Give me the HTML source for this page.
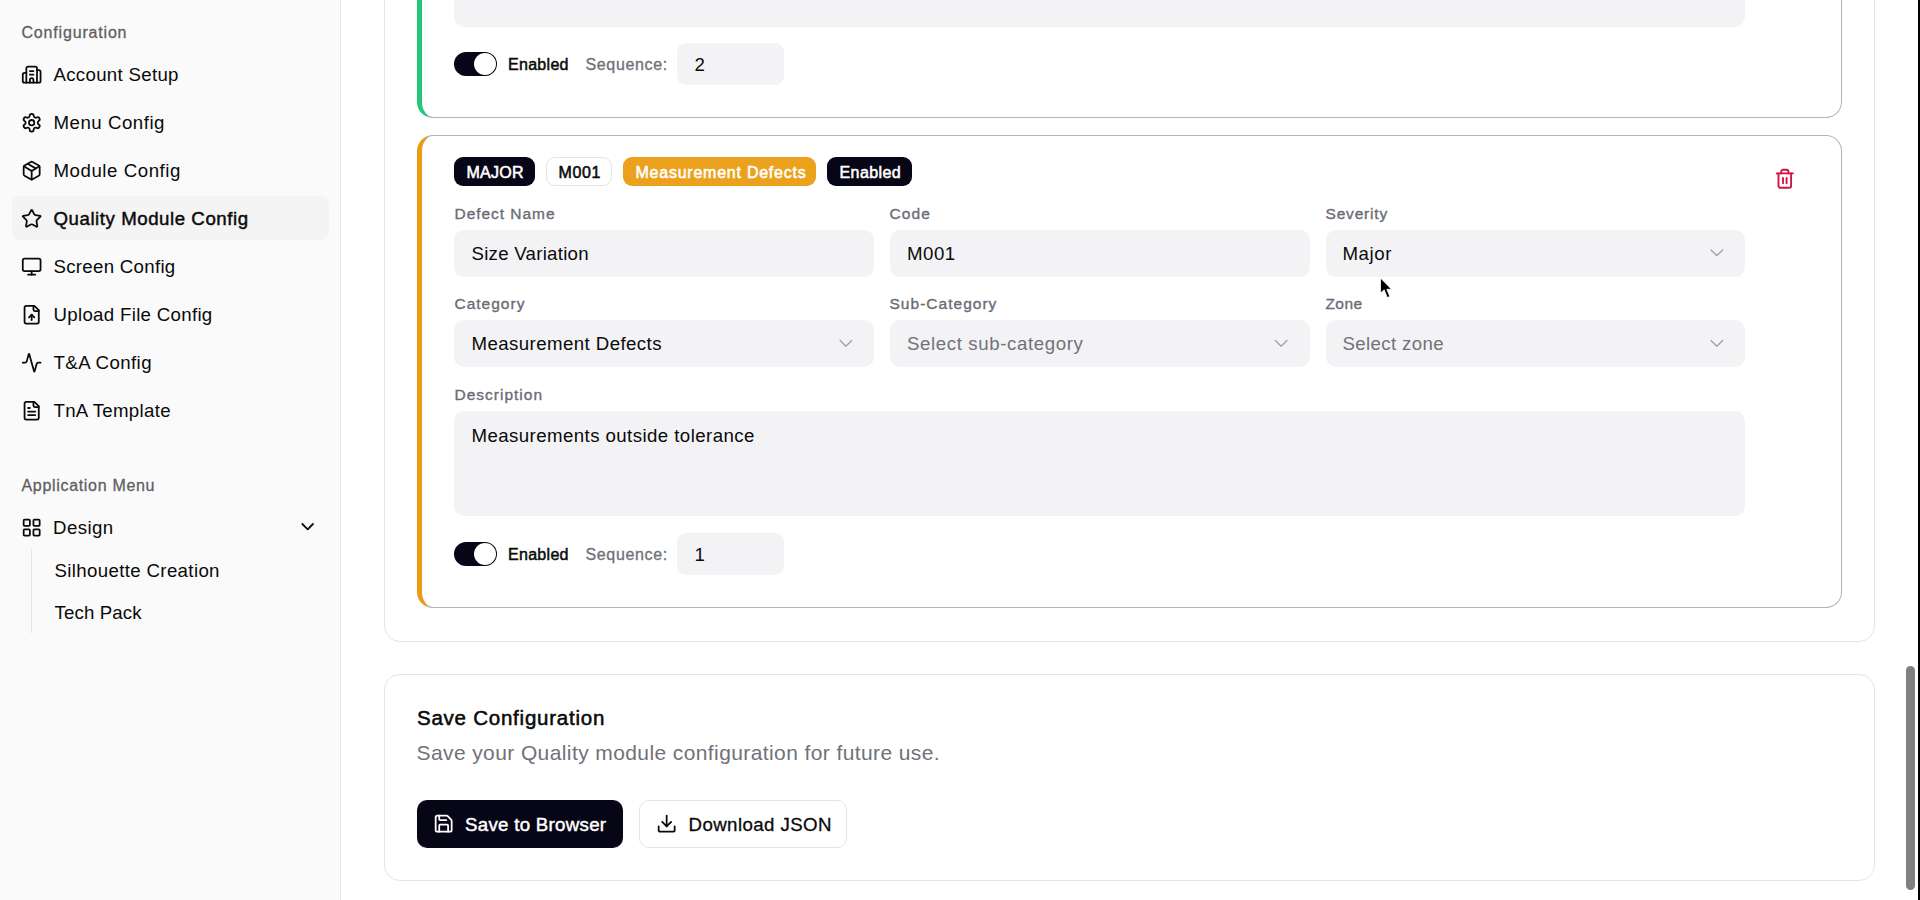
<!DOCTYPE html>
<html><head><meta charset="utf-8"><style>
html,body{margin:0;padding:0;width:1920px;height:900px;overflow:hidden;background:#fff;font-family:"Liberation Sans", sans-serif;}
</style></head><body>
<div style="position:absolute;left:0px;top:0px;width:340px;height:900px;background:#fafafa;"></div><div style="position:absolute;left:340px;top:0px;width:1px;height:900px;background:#e5e5e5;"></div><div style="position:absolute;left:21.50px;top:25.46px;font-size:16px;line-height:16px;font-weight:400;color:#5f5f63;letter-spacing:0.82px;white-space:pre;-webkit-text-stroke:0.3px #5f5f63;">Configuration</div><div style="position:absolute;left:12px;top:196px;width:317px;height:44px;background:#f4f4f4;border-radius:7px;"></div><div style="position:absolute;left:53.50px;top:66.20px;font-size:18.67px;line-height:18.67px;font-weight:400;color:#0a0a0a;letter-spacing:0.3px;white-space:pre;">Account Setup</div><svg style="position:absolute;left:21.3px;top:63.5px;overflow:visible" width="21.33" height="21.33" viewBox="0 0 24 24" fill="none" stroke="#0a0a0a" stroke-width="2" stroke-linecap="round" stroke-linejoin="round"><path d="M10 12h4"/><path d="M10 8h4"/><path d="M14 21v-3a2 2 0 0 0-4 0v3"/><path d="M6 10H4a2 2 0 0 0-2 2v7a2 2 0 0 0 2 2h16a2 2 0 0 0 2-2V9a2 2 0 0 0-2-2h-2"/><path d="M6 21V5a2 2 0 0 1 2-2h8a2 2 0 0 1 2 2v16"/></svg><div style="position:absolute;left:53.50px;top:114.20px;font-size:18.67px;line-height:18.67px;font-weight:400;color:#0a0a0a;letter-spacing:0.52px;white-space:pre;">Menu Config</div><svg style="position:absolute;left:21.3px;top:111.5px;overflow:visible" width="21.33" height="21.33" viewBox="0 0 24 24" fill="none" stroke="#0a0a0a" stroke-width="2" stroke-linecap="round" stroke-linejoin="round"><path d="M12.22 2h-.44a2 2 0 0 0-2 2v.18a2 2 0 0 1-1 1.73l-.43.25a2 2 0 0 1-2 0l-.15-.08a2 2 0 0 0-2.73.73l-.22.38a2 2 0 0 0 .73 2.730l.15.1a2 2 0 0 1 1 1.72v.51a2 2 0 0 1-1 1.74l-.15.09a2 2 0 0 0-.73 2.73l.22.38a2 2 0 0 0 2.73.73l.15-.08a2 2 0 0 1 2 0l.43.25a2 2 0 0 1 1 1.73V20a2 2 0 0 0 2 2h.44a2 2 0 0 0 2-2v-.18a2 2 0 0 1 1-1.73l.43-.25a2 2 0 0 1 2 0l.15.08a2 2 0 0 0 2.73-.73l.22-.39a2 2 0 0 0-.73-2.73l-.15-.08a2 2 0 0 1-1-1.74v-.5a2 2 0 0 1 1-1.74l.15-.09a2 2 0 0 0 .73-2.73l-.22-.38a2 2 0 0 0-2.73-.73l-.15.08a2 2 0 0 1-2 0l-.43-.25a2 2 0 0 1-1-1.73V4a2 2 0 0 0-2-2z"/><circle cx="12" cy="12" r="3"/></svg><div style="position:absolute;left:53.50px;top:162.20px;font-size:18.67px;line-height:18.67px;font-weight:400;color:#0a0a0a;letter-spacing:0.55px;white-space:pre;">Module Config</div><svg style="position:absolute;left:21.3px;top:159.5px;overflow:visible" width="21.33" height="21.33" viewBox="0 0 24 24" fill="none" stroke="#0a0a0a" stroke-width="2" stroke-linecap="round" stroke-linejoin="round"><path d="M11 21.73a2 2 0 0 0 2 0l7-4A2 2 0 0 0 21 16V8a2 2 0 0 0-1-1.73l-7-4a2 2 0 0 0-2 0l-7 4A2 2 0 0 0 3 8v8a2 2 0 0 0 1 1.73z"/><path d="M12 22V12"/><path d="m3.3 7 7.703 4.734a2 2 0 0 0 1.994 0L20.7 7"/><path d="m7.5 4.27 9 5.15"/></svg><div style="position:absolute;left:53.50px;top:210.20px;font-size:18.67px;line-height:18.67px;font-weight:400;color:#0a0a0a;letter-spacing:0.55px;white-space:pre;-webkit-text-stroke:0.45px #0a0a0a;">Quality Module Config</div><svg style="position:absolute;left:21.3px;top:207.5px;overflow:visible" width="21.33" height="21.33" viewBox="0 0 24 24" fill="none" stroke="#0a0a0a" stroke-width="2" stroke-linecap="round" stroke-linejoin="round"><path d="M11.525 2.295a.53.53 0 0 1 .95 0l2.31 4.679a2.123 2.123 0 0 0 1.595 1.16l5.166.756a.53.53 0 0 1 .294.904l-3.736 3.638a2.123 2.123 0 0 0-.611 1.878l.882 5.14a.53.53 0 0 1-.771.56l-4.618-2.428a2.122 2.122 0 0 0-1.973 0L6.396 21.01a.53.53 0 0 1-.77-.56l.881-5.139a2.122 2.122 0 0 0-.611-1.879L2.16 9.795a.53.53 0 0 1 .294-.906l5.165-.755a2.122 2.122 0 0 0 1.597-1.16z"/></svg><div style="position:absolute;left:53.50px;top:258.20px;font-size:18.67px;line-height:18.67px;font-weight:400;color:#0a0a0a;letter-spacing:0.29px;white-space:pre;">Screen Config</div><svg style="position:absolute;left:21.3px;top:255.5px;overflow:visible" width="21.33" height="21.33" viewBox="0 0 24 24" fill="none" stroke="#0a0a0a" stroke-width="2" stroke-linecap="round" stroke-linejoin="round"><rect width="20" height="14" x="2" y="3" rx="2"/><line x1="8" x2="16" y1="21" y2="21"/><line x1="12" x2="12" y1="17" y2="21"/></svg><div style="position:absolute;left:53.50px;top:306.20px;font-size:18.67px;line-height:18.67px;font-weight:400;color:#0a0a0a;letter-spacing:0.31px;white-space:pre;">Upload File Config</div><svg style="position:absolute;left:21.3px;top:303.5px;overflow:visible" width="21.33" height="21.33" viewBox="0 0 24 24" fill="none" stroke="#0a0a0a" stroke-width="2" stroke-linecap="round" stroke-linejoin="round"><path d="M15 2H6a2 2 0 0 0-2 2v16a2 2 0 0 0 2 2h12a2 2 0 0 0 2-2V7Z"/><path d="M14 2v4a2 2 0 0 0 2 2h4"/><path d="M12 12v6"/><path d="m15 15-3-3-3 3"/></svg><div style="position:absolute;left:53.50px;top:354.20px;font-size:18.67px;line-height:18.67px;font-weight:400;color:#0a0a0a;letter-spacing:0.41px;white-space:pre;">T&amp;A Config</div><svg style="position:absolute;left:21.3px;top:351.5px;overflow:visible" width="21.33" height="21.33" viewBox="0 0 24 24" fill="none" stroke="#0a0a0a" stroke-width="2" stroke-linecap="round" stroke-linejoin="round"><path d="M22 12h-2.48a2 2 0 0 0-1.93 1.46l-2.35 8.36a.25.25 0 0 1-.48 0L9.24 2.18a.25.25 0 0 0-.48 0l-2.350 8.36A2 2 0 0 1 4.49 12H2"/></svg><div style="position:absolute;left:53.50px;top:402.20px;font-size:18.67px;line-height:18.67px;font-weight:400;color:#0a0a0a;letter-spacing:0.3px;white-space:pre;">TnA Template</div><svg style="position:absolute;left:21.3px;top:399.5px;overflow:visible" width="21.33" height="21.33" viewBox="0 0 24 24" fill="none" stroke="#0a0a0a" stroke-width="2" stroke-linecap="round" stroke-linejoin="round"><path d="M15 2H6a2 2 0 0 0-2 2v16a2 2 0 0 0 2 2h12a2 2 0 0 0 2-2V7Z"/><path d="M14 2v4a2 2 0 0 0 2 2h4"/><path d="M10 9H8"/><path d="M16 13H8"/><path d="M16 17H8"/></svg><div style="position:absolute;left:21.50px;top:478.46px;font-size:16px;line-height:16px;font-weight:400;color:#5f5f63;letter-spacing:0.68px;white-space:pre;-webkit-text-stroke:0.3px #5f5f63;">Application Menu</div><div style="position:absolute;left:53.00px;top:519.20px;font-size:18.67px;line-height:18.67px;font-weight:400;color:#0a0a0a;letter-spacing:0.42px;white-space:pre;">Design</div><svg style="position:absolute;left:21.3px;top:516.5px;overflow:visible" width="21.33" height="21.33" viewBox="0 0 24 24" fill="none" stroke="#0a0a0a" stroke-width="2" stroke-linecap="round" stroke-linejoin="round"><rect width="7" height="7" x="3" y="3" rx="1"/><rect width="7" height="7" x="14" y="3" rx="1"/><rect width="7" height="7" x="14" y="14" rx="1"/><rect width="7" height="7" x="3" y="14" rx="1"/></svg><svg style="position:absolute;left:297px;top:516px;overflow:visible" width="21.33" height="21.33" viewBox="0 0 24 24" fill="none" stroke="#0a0a0a" stroke-width="2" stroke-linecap="round" stroke-linejoin="round"><path d="m6 9 6 6 6-6"/></svg><div style="position:absolute;left:31px;top:549px;width:1px;height:84px;background:#e5e5e5;"></div><div style="position:absolute;left:54.50px;top:561.70px;font-size:18.67px;line-height:18.67px;font-weight:400;color:#0a0a0a;letter-spacing:0.35px;white-space:pre;">Silhouette Creation</div><div style="position:absolute;left:54.50px;top:604.20px;font-size:18.67px;line-height:18.67px;font-weight:400;color:#0a0a0a;letter-spacing:0.12px;white-space:pre;">Tech Pack</div><div style="position:absolute;left:384px;top:-400px;width:1491px;height:1042px;box-sizing:border-box;border:1px solid #e5e5e5;border-radius:16px;background:#fff;"></div><div style="position:absolute;left:417px;top:-300px;width:1425px;height:418px;box-sizing:border-box;border:1px solid #b4b4b4;border-left:5px solid #22c77a;border-radius:16px;background:#fff;"></div><div style="position:absolute;left:454px;top:-60px;width:1291px;height:87px;background:#f3f3f5;border-radius:10px;"></div><div style="position:absolute;left:417px;top:135px;width:1425px;height:473px;box-sizing:border-box;border:1px solid #b4b4b4;border-left:5px solid #ea9c15;border-radius:16px;background:#fff;"></div><div style="position:absolute;left:454px;top:52px;width:43px;height:24px;background:#070617;border-radius:12px;"></div><div style="position:absolute;left:474px;top:53px;width:22px;height:22px;background:#fff;border-radius:11px;"></div><div style="position:absolute;left:508.00px;top:57.46px;font-size:16px;line-height:16px;font-weight:400;color:#0a0a0a;letter-spacing:0.3px;white-space:pre;-webkit-text-stroke:0.5px #0a0a0a;">Enabled</div><div style="position:absolute;left:585.50px;top:57.46px;font-size:16px;line-height:16px;font-weight:400;color:#71717a;letter-spacing:0.64px;white-space:pre;-webkit-text-stroke:0.35px #71717a;">Sequence:</div><div style="position:absolute;left:677px;top:43px;width:107px;height:42px;background:#f3f3f5;border-radius:9px;"></div><div style="position:absolute;left:694.50px;top:55.70px;font-size:18.67px;line-height:18.67px;font-weight:400;color:#0a0a0a;letter-spacing:0px;white-space:pre;">2</div><div style="position:absolute;left:454px;top:157px;width:81px;height:29px;background:#070617;border-radius:9px;box-sizing:border-box;"></div><div style="position:absolute;left:466.50px;top:153px;font-size:16px;line-height:40px;font-weight:400;color:#fff;letter-spacing:0.25px;white-space:pre;-webkit-text-stroke:0.55px #fff;">MAJOR</div><div style="position:absolute;left:546px;top:157px;width:66px;height:29px;background:#fff;border-radius:9px;box-sizing:border-box;border:1px solid #e4e4e7;"></div><div style="position:absolute;left:558.50px;top:153px;font-size:16px;line-height:40px;font-weight:400;color:#0a0a0a;letter-spacing:0.65px;white-space:pre;-webkit-text-stroke:0.55px #0a0a0a;">M001</div><div style="position:absolute;left:623px;top:157px;width:193px;height:29px;background:#eca11c;border-radius:9px;box-sizing:border-box;"></div><div style="position:absolute;left:635.50px;top:153px;font-size:16px;line-height:40px;font-weight:400;color:#fff;letter-spacing:0.76px;white-space:pre;-webkit-text-stroke:0.55px #fff;">Measurement Defects</div><div style="position:absolute;left:827px;top:157px;width:85px;height:29px;background:#070617;border-radius:9px;box-sizing:border-box;"></div><div style="position:absolute;left:839.50px;top:153px;font-size:16px;line-height:40px;font-weight:400;color:#fff;letter-spacing:0.41000000000000003px;white-space:pre;-webkit-text-stroke:0.55px #fff;">Enabled</div><div style="position:absolute;left:454.50px;top:194px;font-size:15.5px;line-height:40px;font-weight:400;color:#6b6b76;letter-spacing:0.96px;white-space:pre;-webkit-text-stroke:0.35px #6b6b76;">Defect Name</div><div style="position:absolute;left:889.50px;top:194px;font-size:15.5px;line-height:40px;font-weight:400;color:#6b6b76;letter-spacing:1.12px;white-space:pre;-webkit-text-stroke:0.35px #6b6b76;">Code</div><div style="position:absolute;left:1325.50px;top:194px;font-size:15.5px;line-height:40px;font-weight:400;color:#6b6b76;letter-spacing:0.82px;white-space:pre;-webkit-text-stroke:0.35px #6b6b76;">Severity</div><div style="position:absolute;left:454.50px;top:284px;font-size:15.5px;line-height:40px;font-weight:400;color:#6b6b76;letter-spacing:1.0px;white-space:pre;-webkit-text-stroke:0.35px #6b6b76;">Category</div><div style="position:absolute;left:889.50px;top:284px;font-size:15.5px;line-height:40px;font-weight:400;color:#6b6b76;letter-spacing:1.02px;white-space:pre;-webkit-text-stroke:0.35px #6b6b76;">Sub-Category</div><div style="position:absolute;left:1325.50px;top:284px;font-size:15.5px;line-height:40px;font-weight:400;color:#6b6b76;letter-spacing:0.4px;white-space:pre;-webkit-text-stroke:0.35px #6b6b76;">Zone</div><div style="position:absolute;left:454.50px;top:375px;font-size:15.5px;line-height:40px;font-weight:400;color:#6b6b76;letter-spacing:1.0px;white-space:pre;-webkit-text-stroke:0.35px #6b6b76;">Description</div><div style="position:absolute;left:454px;top:229.5px;width:420px;height:47px;background:#f3f3f5;border-radius:10px;"></div><div style="position:absolute;left:454px;top:320px;width:420px;height:47px;background:#f3f3f5;border-radius:10px;"></div><div style="position:absolute;left:890px;top:229.5px;width:419.5px;height:47px;background:#f3f3f5;border-radius:10px;"></div><div style="position:absolute;left:890px;top:320px;width:419.5px;height:47px;background:#f3f3f5;border-radius:10px;"></div><div style="position:absolute;left:1325.5px;top:229.5px;width:419.5px;height:47px;background:#f3f3f5;border-radius:10px;"></div><div style="position:absolute;left:1325.5px;top:320px;width:419.5px;height:47px;background:#f3f3f5;border-radius:10px;"></div><div style="position:absolute;left:471.50px;top:245.20px;font-size:18.67px;line-height:18.67px;font-weight:400;color:#0a0a0a;letter-spacing:0.26px;white-space:pre;">Size Variation</div><div style="position:absolute;left:907.00px;top:245.20px;font-size:18.67px;line-height:18.67px;font-weight:400;color:#0a0a0a;letter-spacing:0.5px;white-space:pre;">M001</div><div style="position:absolute;left:1342.50px;top:245.20px;font-size:18.67px;line-height:18.67px;font-weight:400;color:#0a0a0a;letter-spacing:0.55px;white-space:pre;">Major</div><div style="position:absolute;left:471.50px;top:335.20px;font-size:18.67px;line-height:18.67px;font-weight:400;color:#0a0a0a;letter-spacing:0.42px;white-space:pre;">Measurement Defects</div><div style="position:absolute;left:907.00px;top:335.20px;font-size:18.67px;line-height:18.67px;font-weight:400;color:#71717a;letter-spacing:0.61px;white-space:pre;">Select sub-category</div><div style="position:absolute;left:1342.50px;top:335.20px;font-size:18.67px;line-height:18.67px;font-weight:400;color:#71717a;letter-spacing:0.37px;white-space:pre;">Select zone</div><svg style="position:absolute;left:0;top:0;overflow:visible" width="1" height="1"><path d="M840.1 340.59999999999997 L845.9 346.2 L851.6999999999999 340.59999999999997" fill="none" stroke="#a3a3a8" stroke-width="1.4" stroke-linecap="round" stroke-linejoin="round"/></svg><svg style="position:absolute;left:0;top:0;overflow:visible" width="1" height="1"><path d="M1275.4 340.59999999999997 L1281.2 346.2 L1287.0 340.59999999999997" fill="none" stroke="#a3a3a8" stroke-width="1.4" stroke-linecap="round" stroke-linejoin="round"/></svg><svg style="position:absolute;left:0;top:0;overflow:visible" width="1" height="1"><path d="M1711.0 250.0 L1716.8 255.6 L1722.6 250.0" fill="none" stroke="#a3a3a8" stroke-width="1.4" stroke-linecap="round" stroke-linejoin="round"/></svg><svg style="position:absolute;left:0;top:0;overflow:visible" width="1" height="1"><path d="M1711.0 340.59999999999997 L1716.8 346.2 L1722.6 340.59999999999997" fill="none" stroke="#a3a3a8" stroke-width="1.4" stroke-linecap="round" stroke-linejoin="round"/></svg><div style="position:absolute;left:454px;top:410.5px;width:1291px;height:105.5px;background:#f3f3f5;border-radius:10px;"></div><div style="position:absolute;left:471.50px;top:426.80px;font-size:18.67px;line-height:18.67px;font-weight:400;color:#0a0a0a;letter-spacing:0.42px;white-space:pre;">Measurements outside tolerance</div><div style="position:absolute;left:454px;top:542px;width:43px;height:24px;background:#070617;border-radius:12px;"></div><div style="position:absolute;left:474px;top:543px;width:22px;height:22px;background:#fff;border-radius:11px;"></div><div style="position:absolute;left:508.00px;top:547.46px;font-size:16px;line-height:16px;font-weight:400;color:#0a0a0a;letter-spacing:0.3px;white-space:pre;-webkit-text-stroke:0.5px #0a0a0a;">Enabled</div><div style="position:absolute;left:585.50px;top:547.46px;font-size:16px;line-height:16px;font-weight:400;color:#71717a;letter-spacing:0.64px;white-space:pre;-webkit-text-stroke:0.35px #71717a;">Sequence:</div><div style="position:absolute;left:677px;top:533px;width:107px;height:42px;background:#f3f3f5;border-radius:9px;"></div><div style="position:absolute;left:694.50px;top:545.70px;font-size:18.67px;line-height:18.67px;font-weight:400;color:#0a0a0a;letter-spacing:0px;white-space:pre;">1</div><svg style="position:absolute;left:1774.3px;top:167.6px" width="21.6" height="21.6" viewBox="0 0 24 24" fill="none" stroke="#d3123f" stroke-width="2.1" stroke-linecap="round" stroke-linejoin="round"><path d="M3 6h18"/><path d="M19 6v14c0 1-1 2-2 2H7c-1 0-2-1-2-2V6"/><path d="M8 6V4c0-1 1-2 2-2h4c1 0 2 1 2 2v2"/><line x1="10" x2="10" y1="11" y2="17"/><line x1="14" x2="14" y1="11" y2="17"/></svg><div style="position:absolute;left:384px;top:674px;width:1491px;height:207px;box-sizing:border-box;border:1px solid #e5e5e5;border-radius:16px;background:#fff;"></div><div style="position:absolute;left:417.00px;top:708.35px;font-size:20.5px;line-height:20.5px;font-weight:400;color:#0a0a0a;letter-spacing:0.76px;white-space:pre;-webkit-text-stroke:0.55px #0a0a0a;">Save Configuration</div><div style="position:absolute;left:416.50px;top:742.12px;font-size:21px;line-height:21px;font-weight:400;color:#71717a;letter-spacing:0.4px;white-space:pre;">Save your Quality module configuration for future use.</div><div style="position:absolute;left:417px;top:800px;width:206px;height:48px;background:#070617;border-radius:10px;"></div><svg style="position:absolute;left:432.5px;top:813px;overflow:visible" width="21.33" height="21.33" viewBox="0 0 24 24" fill="none" stroke="#fff" stroke-width="2" stroke-linecap="round" stroke-linejoin="round"><path d="M15.2 3a2 2 0 0 1 1.4.6l3.8 3.8a2 2 0 0 1 .6 1.4V19a2 2 0 0 1-2 2H5a2 2 0 0 1-2-2V5a2 2 0 0 1 2-2z"/><path d="M17 21v-7a1 1 0 0 0-1-1H8a1 1 0 0 0-1 1v7"/><path d="M7 3v4a1 1 0 0 0 1 1h7"/></svg><div style="position:absolute;left:465.00px;top:816.40px;font-size:18.67px;line-height:18.67px;font-weight:400;color:#fff;letter-spacing:0.3px;white-space:pre;-webkit-text-stroke:0.45px #fff;">Save to Browser</div><div style="position:absolute;left:639px;top:800px;width:208px;height:48px;box-sizing:border-box;border:1px solid #e4e4e7;border-radius:10px;background:#fff;"></div><svg style="position:absolute;left:656px;top:813px;overflow:visible" width="21.33" height="21.33" viewBox="0 0 24 24" fill="none" stroke="#0a0a0a" stroke-width="2" stroke-linecap="round" stroke-linejoin="round"><path d="M21 15v4a2 2 0 0 1-2 2H5a2 2 0 0 1-2-2v-4"/><polyline points="7 10 12 15 17 10"/><line x1="12" x2="12" y1="15" y2="3"/></svg><div style="position:absolute;left:688.50px;top:816.40px;font-size:18.67px;line-height:18.67px;font-weight:400;color:#0a0a0a;letter-spacing:0.42px;white-space:pre;-webkit-text-stroke:0.3px #0a0a0a;">Download JSON</div><svg style="position:absolute;left:0;top:0;overflow:visible" width="1" height="1"><path d="M1380.5 278 L1380.5 293 L1384.2 289.8 L1387.2 297.5 L1389.8 296.4 L1386.8 289.3 L1391.5 289.3 Z" fill="#000" stroke="#fff" stroke-width="0.8" stroke-linejoin="round"/></svg><div style="position:absolute;left:1906px;top:666px;width:9px;height:224px;background:#808080;border-radius:4.5px;"></div><div style="position:absolute;left:1918px;top:0px;width:2px;height:900px;background:#000;"></div>
</body></html>
